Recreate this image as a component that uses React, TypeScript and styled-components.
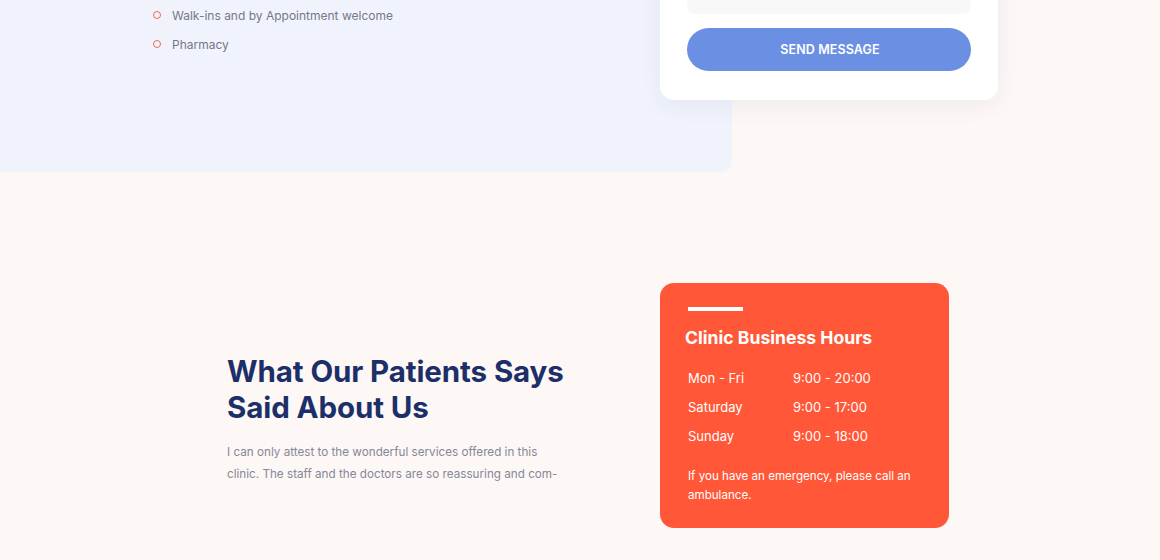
import styled, { createGlobalStyle } from "styled-components";

const GlobalStyle = createGlobalStyle`
    html, body {
        margin: 0;
        padding: 0;
        background: #fdf7f6;
        font-family: Inter, "Noto Sans", sans-serif;
        overflow: hidden;
    }
`;

const Page = styled.div`
    width: 1160px;
    height: 560px;
    overflow: hidden;
`;

const Shift = styled.div`
    margin-top: -40px;
`;

const ContactSection = styled.section`
    display: grid;
    grid-template-columns: 660px 72px 266px;
    grid-template-rows: 212px;
`;

const InfoPanel = styled.div`
    grid-column: 1 / 3;
    grid-row: 1;
    background: #f0f3fc;
    border-bottom-right-radius: 10px;
    padding: 46px 0 0 153px;
`;

const FeatureList = styled.ul`
    list-style: none;
    margin: 0;
    padding: 0;
    display: flex;
    flex-direction: column;
    gap: 11px;
`;

const FeatureItem = styled.li`
    display: flex;
    align-items: center;
    gap: 11px;
    height: 18px;
    font-size: 12px;
    color: #747889;
`;

const Ring = styled.span`
    width: 6px;
    height: 6px;
    border: 1.7px solid #f26a4c;
    border-radius: 50%;
    flex-shrink: 0;
`;

const FormCard = styled.div`
    grid-column: 2 / 4;
    grid-row: 1;
    align-self: start;
    position: relative;
    z-index: 1;
    background: #ffffff;
    border-radius: 0 0 14px 14px;
    box-shadow: 0 6px 24px rgba(40, 50, 90, 0.06);
    padding: 0 27px 29px 27px;
    display: flex;
    flex-direction: column;
    gap: 14px;
`;

const Field = styled.div`
    height: 54px;
    background: #f8f8f9;
    border-radius: 0 0 8px 8px;
`;

const SendButton = styled.button`
    height: 43px;
    border: none;
    border-radius: 22px;
    background: #6b90e3;
    color: #ffffff;
    font-family: Inter, "Noto Sans", sans-serif;
    font-size: 12.5px;
    font-weight: 600;
    letter-spacing: 0.1px;
    text-transform: uppercase;
    padding-left: 8px;
    cursor: pointer;
`;

const TestimonialSection = styled.section`
    display: flex;
    align-items: flex-start;
    padding: 111px 0 0 227px;
`;

const Intro = styled.div`
    width: 433px;
    margin-top: 70px;
`;

const Heading = styled.h2`
    margin: 0;
    font-size: 29.5px;
    line-height: 36px;
    font-weight: 700;
    color: #1c2f68;
    letter-spacing: -0.1px;
`;

const Quote = styled.p`
    margin: 16px 0 0 0;
    width: 360px;
    font-size: 11.7px;
    line-height: 22px;
    color: #858896;
`;

const HoursCard = styled.div`
    width: 289px;
    box-sizing: border-box;
    background: #ff5737;
    border-radius: 14px;
    padding: 24px 27px 23px 28px;
    color: #ffffff;
`;

const Bar = styled.div`
    width: 55px;
    height: 4px;
    background: #ffffff;
`;

const HoursTitle = styled.h3`
    margin: 15px 0 0 -3px;
    font-size: 17.6px;
    line-height: 24px;
    font-weight: 700;
`;

const HoursTable = styled.div`
    margin-top: 13px;
    display: grid;
    grid-template-columns: 105px 1fr;
    grid-auto-rows: 29px;
    align-items: center;
    font-size: 13px;
`;

const Note = styled.p`
    margin: 17px 0 0 0;
    font-size: 11.6px;
    line-height: 19px;
`;

const features = ["Walk-ins and by Appointment welcome", "Pharmacy"];

const hours = [
    ["Mon - Fri", "9:00 - 20:00"],
    ["Saturday", "9:00 - 17:00"],
    ["Sunday", "9:00 - 18:00"],
];

export default function App() {
    return (
        <Page>
            <GlobalStyle />
            <Shift>
                <ContactSection>
                    <InfoPanel>
                        <FeatureList>
                            {features.map((f) => (
                                <FeatureItem key={f}>
                                    <Ring />
                                    {f}
                                </FeatureItem>
                            ))}
                        </FeatureList>
                    </InfoPanel>
                    <FormCard>
                        <Field />
                        <SendButton>Send Message</SendButton>
                    </FormCard>
                </ContactSection>
            </Shift>
            <TestimonialSection>
                <Intro>
                    <Heading>
                        What Our Patients Says
                        <br />
                        Said About Us
                    </Heading>
                    <Quote>
                        I can only attest to the wonderful services offered in this
                        <br />
                        clinic. The staff and the doctors are so reassuring and com-
                    </Quote>
                </Intro>
                <HoursCard>
                    <Bar />
                    <HoursTitle>Clinic Business Hours</HoursTitle>
                    <HoursTable>
                        {hours.map(([day, time]) => [
                            <span key={day}>{day}</span>,
                            <span key={time}>{time}</span>,
                        ])}
                    </HoursTable>
                    <Note>If you have an emergency, please call an ambulance.</Note>
                </HoursCard>
            </TestimonialSection>
        </Page>
    );
}
